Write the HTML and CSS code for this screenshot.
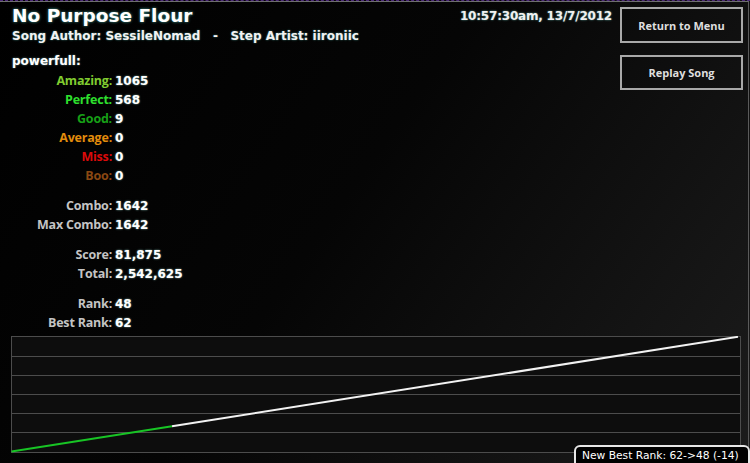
FILE: index.html
```html
<!DOCTYPE html>
<html lang="en">
<head>
    <meta charset="UTF-8">
    <meta name="viewport" content="width=device-width, initial-scale=1.0">
    <title>Evaluation - No Purpose Flour</title>
    <link rel="stylesheet" href="styles.css">
</head>
<body>
    <div class="screen">
        <div class="top">
            <div class="info">
                <h1 class="title">No Purpose Flour</h1>
                <p class="credits">Song Author: SessileNomad   -   Step Artist: iironiic</p>
                <p class="mod">powerfull:</p>

                <div class="stats">
                    <div class="group">
                        <div class="row"><span class="label amazing">Amazing:</span><span class="value">1065</span></div>
                        <div class="row"><span class="label perfect">Perfect:</span><span class="value">568</span></div>
                        <div class="row"><span class="label good">Good:</span><span class="value">9</span></div>
                        <div class="row"><span class="label average">Average:</span><span class="value">0</span></div>
                        <div class="row"><span class="label miss">Miss:</span><span class="value">0</span></div>
                        <div class="row"><span class="label boo">Boo:</span><span class="value">0</span></div>
                    </div>
                    <div class="group">
                        <div class="row"><span class="label">Combo:</span><span class="value">1642</span></div>
                        <div class="row"><span class="label">Max Combo:</span><span class="value">1642</span></div>
                    </div>
                    <div class="group">
                        <div class="row"><span class="label">Score:</span><span class="value">81,875</span></div>
                        <div class="row"><span class="label">Total:</span><span class="value">2,542,625</span></div>
                    </div>
                    <div class="group">
                        <div class="row"><span class="label">Rank:</span><span class="value">48</span></div>
                        <div class="row"><span class="label">Best Rank:</span><span class="value">62</span></div>
                    </div>
                </div>
            </div>

            <div class="stamp">10:57:30am, 13/7/2012</div>

            <div class="actions">
                <button type="button" class="btn">Return to Menu</button>
                <button type="button" class="btn">Replay Song</button>
            </div>
        </div>

        <!-- combo progression over the song -->
        <div class="graph">
            <svg width="730" height="117" viewBox="0 0 730 117">
                <g stroke="#4c4c4c" stroke-width="1">
                    <line x1="0" y1="0.5" x2="730" y2="0.5"/>
                    <line x1="0" y1="20.5" x2="730" y2="20.5"/>
                    <line x1="0" y1="39.5" x2="730" y2="39.5"/>
                    <line x1="0" y1="58.5" x2="730" y2="58.5"/>
                    <line x1="0" y1="77.5" x2="730" y2="77.5"/>
                    <line x1="0" y1="96.5" x2="730" y2="96.5"/>
                    <line x1="0" y1="116.5" x2="730" y2="116.5"/>
                    <line x1="0.5" y1="0" x2="0.5" y2="117"/>
                    <line x1="729.5" y1="0" x2="729.5" y2="117"/>
                </g>
                <line x1="0.5" y1="115.6" x2="161" y2="90.2" stroke="#18c425" stroke-width="2"/>
                <line x1="161" y1="90.2" x2="727" y2="0.8" stroke="#f2f2f2" stroke-width="2"/>
            </svg>
        </div>

        <div class="badge">New Best Rank: 62-&gt;48 (-14)</div>
    </div>
</body>
</html>
```

FILE: styles.css
```css
body {
    margin: 0;
    width: 750px;
    height: 463px;
    overflow: hidden;
    border-top: 1px dashed #4a2777;
    box-sizing: border-box;
    background: linear-gradient(125deg, #000 0%, #050505 45%, #141414 80%, #1c1c1c 100%);
    font-family: "DejaVu Sans", Verdana, sans-serif;
    color: #fff;
}
.screen {
    position: relative;
    box-sizing: border-box;
    width: 749px;
    height: 462px;
    border-top: 1px solid #6e6e6e;
    border-right: 1px solid #5a5a5a;
    padding: 3px 5px 0 11px;
}
.top {
    display: flex;
    align-items: flex-start;
}
.info {
    flex: 1;
    padding-left: 1px;
}
.title {
    margin: 0;
    font-size: 18.5px;
    line-height: 22px;
    font-weight: bold;
    text-shadow: 0 0 3px rgba(80, 200, 190, 0.8);
}
.credits {
    margin: 2px 0 0;
    font-size: 12px;
    line-height: 14px;
    font-weight: bold;
    white-space: pre;
    color: #f2f2f2;
    text-shadow: 0 0 2px rgba(90, 190, 180, 0.7);
}
.mod {
    margin: 11px 0 0;
    font-size: 12px;
    line-height: 14px;
    font-weight: bold;
    text-shadow: 0 0 2px rgba(140, 200, 200, 0.7);
}
.stats {
    margin-top: 2.5px;
}
.group + .group {
    margin-top: 11px;
}
.row {
    display: flex;
    align-items: baseline;
    height: 19px;
    line-height: 19px;
}
.label {
    width: 100px;
    margin-right: 3px;
    text-align: right;
    font-family: "Open Sans", "Noto Sans", sans-serif;
    font-size: 12.5px;
    font-weight: 700;
    letter-spacing: -0.2px;
    color: #c4c4c4;
}
.value {
    font-size: 12px;
    font-weight: bold;
    color: #fff;
    text-shadow: 0 0 2px rgba(150, 210, 200, 0.8);
}
.amazing { color: #80cc30; }
.perfect { color: #2ee02e; }
.good    { color: #17a017; }
.average { color: #e28c0c; }
.miss    { color: #dc0a0a; }
.boo     { color: #8a4812; }

.stamp {
    margin: 4px 8px 0 0;
    font-size: 12px;
    line-height: 14px;
    font-weight: bold;
    letter-spacing: -0.2px;
    color: #f0f0f0;
    text-shadow: 0 0 2px rgba(110, 200, 190, 0.8);
}
.actions {
    display: flex;
    flex-direction: column;
    gap: 12px;
    margin-top: 2px;
}
.btn {
    width: 123px;
    height: 36px;
    padding: 0;
    background: transparent;
    border: 2px solid #a9a9a9;
    color: #dedede;
    font-family: "Open Sans", "Noto Sans", sans-serif;
    font-size: 11px;
    font-weight: bold;
    cursor: pointer;
}
.btn + .btn {
    height: 35px;
}
.graph {
    width: 730px;
    height: 117px;
    margin-top: 4px;
    background: #0d0d0d;
}
.graph svg {
    display: block;
}
.badge {
    position: absolute;
    left: 574px;
    top: 443px;
    width: 166px;
    height: 24px;
    padding-left: 6px;
    border: 2px solid #e6e6e6;
    border-radius: 6px 6px 0 0;
    background: #000;
    font-size: 10.7px;
    line-height: 17px;
    color: #fff;
}
```
